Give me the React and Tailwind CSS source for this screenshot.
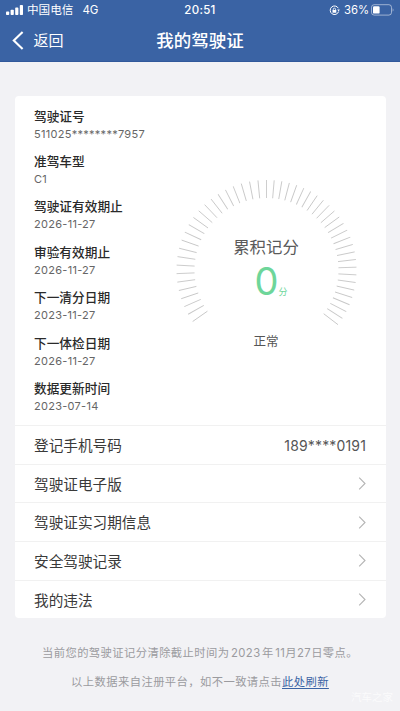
import React from "react";

const fields = [
  { label: "驾驶证号", value: "511025********7957" },
  { label: "准驾车型", value: "C1" },
  { label: "驾驶证有效期止", value: "2026-11-27" },
  { label: "审验有效期止", value: "2026-11-27" },
  { label: "下一清分日期", value: "2023-11-27" },
  { label: "下一体检日期", value: "2026-11-27" },
  { label: "数据更新时间", value: "2023-07-14" },
];

const links = ["驾驶证电子版", "驾驶证实习期信息", "安全驾驶记录", "我的违法"];

// dial ticks, degrees from 12 o'clock
const LEFT_STEP = 5.43;
const RIGHT_STEP = 4.9;
const ticks = [];
for (let i = -23; i <= 26; i++) ticks.push(i * (i < 0 ? LEFT_STEP : RIGHT_STEP));

export default function App() {
  return (
    <div className="w-full h-[711px] bg-[#f2f2f5] overflow-hidden font-['Inter','Noto_Sans_CJK_SC',sans-serif]">
      <header className="h-[62px] bg-[#3a63a4] text-white border-b border-[#31599b]">
        <StatusBar />
        <NavBar />
      </header>

      <main className="mt-[34px] ml-[14.5px] mr-[14.5px] h-[522px] bg-white rounded-[4px]">
        <section className="h-[329px] flex">
          <dl className="w-[155px] pl-[19.5px] pt-[11.7px] flex flex-col gap-[10.4px]">
            {fields.map((f) => (
              <Field key={f.label} {...f} />
            ))}
          </dl>
          <div className="pt-[79px]">
            <Dial />
          </div>
        </section>

        <Row label="登记手机号码">
          <span className="pt-px text-[14px] tracking-[0.15px] text-[#555]">189****0191</span>
        </Row>
        {links.map((label) => (
          <Row key={label} label={label}>
            <Chevron />
          </Row>
        ))}
      </main>

      <footer className="pt-[20.7px] text-center text-[11.3px] leading-[29.5px] tracking-[0.42px] text-[#9b9b9f] whitespace-nowrap">
        <p>
          当前您的驾驶证记分清除截止时间为<span className="mx-[1.5px]">2023</span>年
          <span className="ml-[1.5px]">11</span>月27日零点。
        </p>
        <p>
          以上数据来自注册平台，如不一致请点击
          <a className="text-[#3a63a4] underline underline-offset-2">此处刷新</a>
        </p>
      </footer>

      <div className="absolute left-[351px] top-[691px] text-[10.5px] leading-[14px] text-white/70">汽车之家</div>
    </div>
  );
}

function StatusBar() {
  return (
    <div className="h-[20px] grid grid-cols-[1fr_auto_1fr] items-center pl-[6px] pr-[6px] text-[11px] leading-[20px]">
      <div className="flex items-center">
        <svg width="18" height="11" viewBox="0 0 18 11" fill="#fff">
          <rect x="0" y="6.5" width="3.2" height="3.5" rx="0.8" />
          <rect x="4.6" y="4.8" width="3.2" height="5.2" rx="0.8" />
          <rect x="9.2" y="2.6" width="3.2" height="7.4" rx="0.8" />
          <rect x="13.8" y="0" width="3.2" height="10" rx="0.8" />
        </svg>
        <span className="ml-[3px] text-[11.6px]">中国电信</span>
        <span className="ml-[9px] text-[11.5px]">4G</span>
      </div>
      <div className="text-[11.5px] font-medium tracking-[0.3px]">20:51</div>
      <div className="flex items-center justify-end">
        <svg width="11" height="11" viewBox="0 0 11 11" fill="none" stroke="#fff">
          <path d="M9.3 3.2A4.3 4.3 0 1 0 9.6 6.6" strokeWidth="1" />
          <path d="M8.2 4.6L10.8 4.6L9.7 6.6Z" fill="#fff" stroke="none" />
          <rect x="3.5" y="5" width="3.8" height="2.8" rx="0.4" fill="#fff" stroke="none" />
          <path d="M4.3 5V4.2a1.1 1.1 0 0 1 2.2 0V5" strokeWidth="0.8" />
        </svg>
        <span className="ml-[4px] text-[11.3px]">36%</span>
        <svg className="ml-[2px]" width="23" height="12" viewBox="0 0 23 12" fill="none">
          <rect x="0.5" y="0.7" width="20" height="10.4" rx="2.6" stroke="#fff" strokeOpacity="0.5" />
          <rect x="2" y="2.2" width="6.6" height="7.4" rx="1.2" fill="#fff" />
          <path d="M21.7 4.2c1 .5 1 2.9 0 3.4z" fill="#fff" fillOpacity="0.6" />
        </svg>
      </div>
    </div>
  );
}

function NavBar() {
  return (
    <div className="h-[41px] grid grid-cols-[1fr_auto_1fr] items-center">
      <div className="flex items-center pl-[12px]">
        <svg width="12" height="19" viewBox="0 0 12 19" fill="none" stroke="#fff" strokeWidth="2.1">
          <path d="M10.6 1L1.8 9.5L10.6 18" />
        </svg>
        <span className="ml-[9.5px] text-[15px] leading-[22px]">返回</span>
      </div>
      <h1 className="text-[17.5px] leading-[24px] font-medium">我的驾驶证</h1>
      <div />
    </div>
  );
}

function Field({ label, value }) {
  return (
    <div>
      <dt className="text-[12.7px] leading-[18px] font-medium text-[#2a2a2a] whitespace-nowrap">{label}</dt>
      <dd className="text-[11px] leading-[17px] tracking-[0.28px] text-[#666] whitespace-nowrap">{value}</dd>
    </div>
  );
}

function Row({ label, children }) {
  return (
    <div className="h-[38.7px] flex items-center justify-between pl-[19.5px] pr-[19.5px] border-t border-[#f1f1f1]">
      <span className="pt-[2px] text-[14.65px] leading-[22px] text-[#3a3a3a]">{label}</span>
      {children}
    </div>
  );
}

function Chevron() {
  return (
    <svg width="8" height="13" viewBox="0 0 8 13" fill="none" stroke="#b4b4b4" strokeWidth="1.1">
      <path d="M1.2 0.7L7 6.5L1.2 12.3" />
    </svg>
  );
}

function Dial() {
  return (
    <div className="grid w-[190px] ml-[1.5px]">
      <svg className="col-start-1 row-start-1" width="190" height="190" viewBox="0 0 190 190">
        {ticks.map((a) => (
          <line key={a} x1="95.5" y1="5" x2="95.5" y2="23" stroke="#c8c8c8" strokeWidth="0.9" transform={`rotate(${a} 95.5 95)`} />
        ))}
      </svg>
      <div className="col-start-1 row-start-1 flex flex-col items-center pt-[60px]">
        <div className="text-[16.4px] leading-[24px] text-[#5a5a5a]">累积记分</div>
        <div className="flex items-baseline pl-[10px] text-[#6ed69a]">
          <span className="text-[38px] leading-[44px] font-normal">0</span>
          <span className="text-[9px]">分</span>
        </div>
        <div className="mt-[30px] text-[12.5px] leading-[18px] text-[#555]">正常</div>
      </div>
    </div>
  );
}
